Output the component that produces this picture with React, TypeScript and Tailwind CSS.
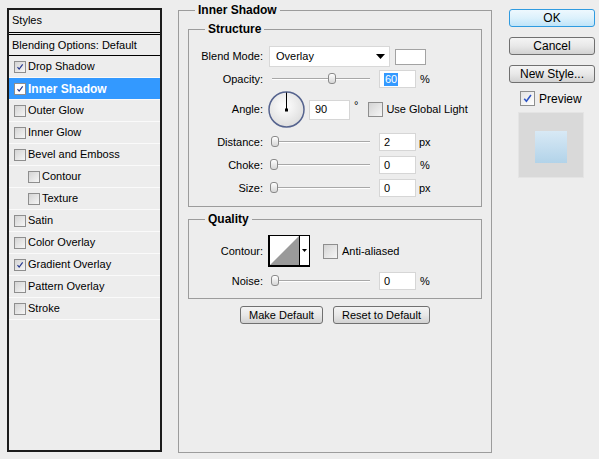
import React from 'react'

type Effect = { name: string; on?: boolean; active?: boolean; sub?: boolean }

const effects: Effect[] = [
  { name: 'Drop Shadow', on: true },
  { name: 'Inner Shadow', on: true, active: true },
  { name: 'Outer Glow' },
  { name: 'Inner Glow' },
  { name: 'Bevel and Emboss' },
  { name: 'Contour', sub: true },
  { name: 'Texture', sub: true },
  { name: 'Satin' },
  { name: 'Color Overlay' },
  { name: 'Gradient Overlay', on: true },
  { name: 'Pattern Overlay' },
  { name: 'Stroke' },
]

function Tick({ color = '#24378f' }: { color?: string }) {
  return (
    <svg viewBox="0 0 12 12" className="h-full w-full">
      <path d="M3 6.2 L5 8.6 L9.2 2.8" fill="none" stroke={color} strokeWidth="1.4" />
    </svg>
  )
}

function Checkbox({ checked, size, light }: { checked?: boolean; size: string; light?: boolean }) {
  return (
    <span
      className={`flex shrink-0 items-center justify-center border border-[#8e8e8e] ${size} ${
        light ? 'bg-white' : 'bg-linear-to-br from-[#d4d4d4] to-[#f6f6f6]'
      }`}
    >
      {checked && <Tick />}
    </span>
  )
}

function GroupBox({ title, className, children }: { title: string; className: string; children?: React.ReactNode }) {
  return (
    <div className={`relative flex flex-col border border-[#9c9c9c] ${className}`}>
      <span className="absolute -top-[8px] left-[16px] bg-[#ededed] px-[3px] text-[12px] leading-[14px] font-bold">
        {title}
      </span>
      {children}
    </div>
  )
}

function Label({ children }: { children: React.ReactNode }) {
  return <span className="w-[74px] shrink-0 text-right">{children}</span>
}

function Slider({ pos }: { pos: string }) {
  return (
    <div className="relative ml-[6px] h-[12px] w-[104px] shrink-0">
      <div className="absolute top-[5px] right-[3px] left-[3px] h-[2px] border-t border-b border-t-[#a8a8a8] border-b-white" />
      <div
        className={`absolute top-0 h-[11px] w-[8px] rounded-[3px] border border-[#8a8a8a] bg-linear-to-b from-white to-[#d6d6d6] ${pos}`}
      />
    </div>
  )
}

function Field({ value, selected, className = 'ml-[6px] w-[37px] h-[18px]' }: { value: string; selected?: boolean; className?: string }) {
  return (
    <div className={`flex shrink-0 items-center border border-[#d6d6d6] bg-white pl-[4px] ${className}`}>
      {selected ? <span className="bg-[#3399ff] px-[1px] leading-[13px] text-white">{value}</span> : value}
    </div>
  )
}

function Dial() {
  return (
    <svg width="37" height="37" viewBox="0 0 37 37" className="ml-[5px] shrink-0">
      <defs>
        <radialGradient id="dialFill" cx="0.45" cy="0.4" r="0.6">
          <stop offset="0" stopColor="#ffffff" />
          <stop offset="1" stopColor="#dedede" />
        </radialGradient>
      </defs>
      <circle cx="18.5" cy="18.5" r="17.5" fill="url(#dialFill)" stroke="#55638e" strokeWidth="1.5" />
      <line x1="18.5" y1="19" x2="18.5" y2="1.5" stroke="#000" strokeWidth="1" />
      <rect x="17" y="17.5" width="3" height="3" fill="#000" />
    </svg>
  )
}

function ContourPicker() {
  return (
    <svg width="42" height="32" viewBox="0 0 42 32" className="ml-[5px] shrink-0">
      <rect x="0.5" y="0.5" width="41" height="31" fill="#fff" stroke="#000" />
      <polygon points="1.5,30.5 31,1 31,30.5" fill="#9a9a9a" />
      <line x1="1" y1="0" x2="1" y2="32" stroke="#000" strokeWidth="2" />
      <line x1="0" y1="31" x2="42" y2="31" stroke="#000" strokeWidth="2" />
      <line x1="31.5" y1="0" x2="31.5" y2="32" stroke="#000" />
      <polygon points="34,14 39,14 36.5,17" fill="#000" />
    </svg>
  )
}

function Button({ children, className }: { children: React.ReactNode; className: string }) {
  return (
    <button
      className={`flex shrink-0 items-center justify-center rounded-[3px] border bg-linear-to-b leading-none text-black ${className}`}
    >
      {children}
    </button>
  )
}

const grayBtn = 'border-[#707070] from-[#f4f4f4] via-[#e8e8e8] to-[#d2d2d2]'

export default function App() {
  return (
    <div className="flex h-[459px] w-[599px] bg-[#ededed] font-['Liberation_Sans',Arial,sans-serif] text-[11px] text-black">
      {/* effect list */}
      <div className="mt-[8px] ml-[7px] flex h-[444px] w-[155px] shrink-0 flex-col border-2 border-[#1c1c1c]">
        <div className="flex h-[25px] items-center border-b-[3px] border-double border-black pb-[1px] pl-[3px]">Styles</div>
        <div className="flex h-[21px] items-center border-b border-black pl-[3px]">Blending Options: Default</div>
        {effects.map(e => (
          <div
            key={e.name}
            className={`flex h-[22px] items-center gap-[2px] border-b border-[#fafafa] ${e.sub ? 'pl-[19px]' : 'pl-[5px]'} ${
              e.active ? 'bg-[#3399ff] text-[12px] font-bold text-white' : ''
            }`}
          >
            <Checkbox checked={e.on} size="h-[12px] w-[12px]" light={e.active} />
            <span>{e.name}</span>
          </div>
        ))}
      </div>

      {/* settings */}
      <GroupBox title="Inner Shadow" className="mt-[10px] ml-[16px] h-[443px] w-[314px] shrink-0">
        <GroupBox title="Structure" className="mt-[18px] ml-[9px] h-[178px] w-[294px]">
          <div className="mt-[16px] flex h-[21px] items-center">
            <Label>Blend Mode:</Label>
            <div className="ml-[6px] flex h-[21px] w-[121px] items-center justify-between border border-[#d8d8d8] bg-white pr-[4px] pl-[6px]">
              <span>Overlay</span>
              <svg width="9" height="5" viewBox="0 0 9 5">
                <polygon points="0,0 9,0 4.5,5" fill="#000" />
              </svg>
            </div>
            <div className="ml-[5px] h-[16px] w-[31px] border border-[#a3a3a3] bg-white" />
          </div>
          <div className="mt-[3px] flex h-[18px] items-center">
            <Label>Opacity:</Label>
            <Slider pos="left-[59px]" />
            <Field value="60" selected />
            <span className="ml-[4px]">%</span>
          </div>
          <div className="mt-[3px] flex h-[37px] items-center">
            <Label>Angle:</Label>
            <Dial />
            <Field value="90" className="ml-[4px] h-[20px] w-[41px] pl-[5px]" />
            <span className="ml-[4px] self-start pt-[6px]">°</span>
            <span className="ml-[10px]">
              <Checkbox size="h-[15px] w-[15px]" />
            </span>
            <span className="ml-[3px]">Use Global Light</span>
          </div>
          <div className="mt-[5px] flex h-[18px] items-center">
            <Label>Distance:</Label>
            <Slider pos="left-[2px]" />
            <Field value="2" />
            <span className="ml-[3px]">px</span>
          </div>
          <div className="mt-[5px] flex h-[18px] items-center">
            <Label>Choke:</Label>
            <Slider pos="left-[1px]" />
            <Field value="0" />
            <span className="ml-[4px]">%</span>
          </div>
          <div className="mt-[5px] flex h-[18px] items-center">
            <Label>Size:</Label>
            <Slider pos="left-[1px]" />
            <Field value="0" />
            <span className="ml-[3px]">px</span>
          </div>
        </GroupBox>

        <GroupBox title="Quality" className="mt-[12px] ml-[9px] h-[80px] w-[294px]">
          <div className="mt-[15px] flex h-[32px] items-center">
            <Label>Contour:</Label>
            <ContourPicker />
            <span className="ml-[13px]">
              <Checkbox size="h-[15px] w-[15px]" />
            </span>
            <span className="ml-[4px]">Anti-aliased</span>
          </div>
          <div className="mt-[5px] flex h-[18px] items-center">
            <Label>Noise:</Label>
            <Slider pos="left-[2px]" />
            <Field value="0" />
            <span className="ml-[4px]">%</span>
          </div>
        </GroupBox>

        <div className="mt-[7px] flex justify-center gap-[10px]">
          <Button className={`h-[18px] w-[83px] ${grayBtn}`}>Make Default</Button>
          <Button className={`h-[18px] w-[97px] ${grayBtn}`}>Reset to Default</Button>
        </div>
      </GroupBox>

      {/* dialog buttons + preview */}
      <div className="mt-[9px] ml-[17px] flex w-[86px] shrink-0 flex-col text-[12px]">
        <Button className="h-[18px] w-[86px] border-[#2f9be0] from-[#eef8fe] via-[#dcf1fc] to-[#bfe4f9]">OK</Button>
        <Button className={`mt-[10px] h-[18px] w-[86px] ${grayBtn}`}>Cancel</Button>
        <Button className={`mt-[10px] h-[18px] w-[86px] ${grayBtn}`}>New Style...</Button>
        <div className="mt-[8px] ml-[11px] flex h-[15px] items-center gap-[4px]">
          <span className="flex h-[15px] w-[15px] items-center justify-center border border-[#8e8f8f] bg-linear-to-br from-[#e4e4e4] to-white">
            <Tick color="#2d54c4" />
          </span>
          <span>Preview</span>
        </div>
        <div className="mt-[6px] ml-[9px] flex h-[66px] w-[66px] items-center justify-center border border-[#e4e4e4] bg-[#d9d9d9]">
          <div className="mt-[3px] h-[32px] w-[32px] bg-linear-to-b from-[#d8e9f5] to-[#b2d3e9]" />
        </div>
      </div>
    </div>
  )
}
